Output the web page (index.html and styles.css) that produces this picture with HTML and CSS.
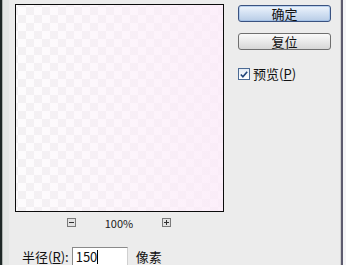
FILE: index.html
```html
<!DOCTYPE html>
<html lang="zh">
<head>
<meta charset="utf-8">
<link rel="stylesheet" href="styles.css">
</head>
<body>
<div class="frame">
  <div class="edge-dark"></div>
  <div class="edge-mid"></div>
  <div class="edge-light"></div>
  <div class="panel">
    <div class="left-col">
      <div class="preview"></div>
      <div class="zoombar">
        <span class="zbtn"><svg width="7" height="7" viewBox="0 0 7 7"><path d="M1 3.5h5" stroke="#303030" stroke-width="1"/></svg></span>
        <span class="zlabel">100%</span>
        <span class="zbtn"><svg width="7" height="7" viewBox="0 0 7 7"><path d="M1 3.5h5M3.5 1v5" stroke="#303030" stroke-width="1"/></svg></span>
      </div>
      <div class="field">
        <span class="flabel">半径(<u>R</u>):</span>
        <span class="input">150<span class="caret"></span></span>
        <span class="unit">像素</span>
      </div>
    </div>
    <div class="right-col">
      <div class="btn btn-default">确定</div>
      <div class="btn">复位</div>
      <label class="check">
        <span class="cbox"><svg width="11" height="11" viewBox="0 0 11 11"><path d="M2 5.5l2.3 2.5L9 2.5" fill="none" stroke="#21457a" stroke-width="1.8"/></svg></span>
        <span>预览(<u>P</u>)</span>
      </label>
    </div>
  </div>
  <div class="edge-right"></div>
</div>
</body>
</html>
```
FILE: styles.css
```css
* { box-sizing: border-box; }
html, body { margin: 0; padding: 0; }
body {
  width: 346px;
  height: 265px;
  overflow: hidden;
  background: #ececec;
  font-family: "Noto Sans CJK SC", "DejaVu Sans", sans-serif;
  font-size: 13px;
  color: #111;
}
u { text-underline-offset: 1px; }
.frame {
  display: flex;
  height: 265px;
}
.edge-dark { width: 2px; background: #1f2927; }
.edge-mid { width: 1px; background: #aeb3b0; }
.edge-light { width: 6px; background: #e4e7e5; }
.panel {
  flex: 1;
  display: flex;
  background: #ececec;
  padding: 4px 0 0 6px;
}
.left-col {
  width: 209px;
  display: flex;
  flex-direction: column;
}
.preview {
  flex-shrink: 0;
  width: 209px;
  height: 208px;
  border: 1px solid #0c0c0c;
  background:
    linear-gradient(to right, rgba(253,240,251,0) 0%, rgba(253,236,250,0.5) 60%, rgba(252,234,249,0.75) 100%),
    repeating-conic-gradient(#f3f1f3 0 25%, #fdfcfd 0 50%) 2px 2px / 16px 16px;
}
.zoombar {
  flex-shrink: 0;
  display: flex;
  align-items: flex-start;
  padding: 6px 0 0 52px;
  height: 15px;
}
.zbtn {
  width: 9px;
  height: 9px;
  border: 1px solid #7a7a7a;
  background: #e2e2e2;
  display: flex;
  align-items: center;
  justify-content: center;
}
.zbtn svg { display: block; }
.zlabel {
  width: 86px;
  text-align: center;
  font-size: 11px;
  line-height: 10px;
  color: #222;
}
.field {
  flex-shrink: 0;
  display: flex;
  align-items: flex-start;
  margin-top: 20px;
  padding-left: 7px;
}
.flabel {
  line-height: 16px;
  margin-top: 2px;
  margin-right: 3px;
  white-space: nowrap;
}
.input {
  width: 56px;
  height: 18px;
  background: #fff;
  border: 1px solid #8a8a8a;
  border-right-color: #d0d0d0;
  border-bottom: none;
  padding: 1px 0 0 3px;
  line-height: 16px;
  display: flex;
  align-items: flex-start;
}
.caret {
  display: inline-block;
  width: 1px;
  height: 14px;
  background: #000;
  margin-top: 1px;
}
.unit { margin-left: 8px; margin-top: 2px; line-height: 16px; }
.right-col {
  display: flex;
  flex-direction: column;
  padding: 1px 0 0 14px;
}
.btn {
  width: 93px;
  height: 17px;
  border: 1px solid #6f6f6f;
  border-radius: 3px;
  background: linear-gradient(#fafafa, #e9e9e9 50%, #d6d6d6);
  text-align: center;
  line-height: 15px;
  margin-bottom: 11px;
}
.btn-default {
  border-color: #3a5280;
  background: linear-gradient(#eef4fc, #d2e0f2 50%, #b8cce6);
  box-shadow: inset 0 0 0 1px rgba(150,185,230,0.6);
}
.check {
  display: flex;
  align-items: center;
  margin-top: 6px;
  line-height: 14px;
}
.cbox {
  width: 12px;
  height: 12px;
  border: 1px solid #4b6a94;
  background: linear-gradient(#e4ebf4, #fff);
  margin-right: 3px;
  display: flex;
  align-items: center;
  justify-content: center;
}
.cbox svg { display: block; }
.edge-right {
  width: 6px;
  display: flex;
  background: linear-gradient(to right, #d0d0d0 0 1px, #5d5b6e 1px 3px, #f4f4f6 3px);
  margin-left: auto;
}
```
